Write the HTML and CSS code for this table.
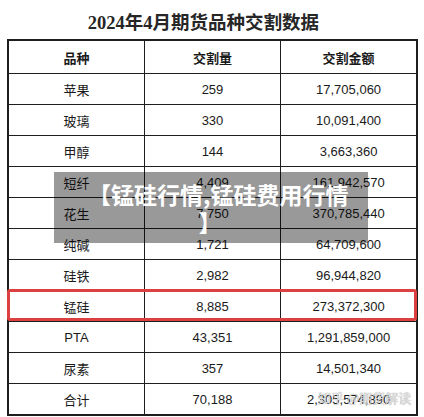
FILE: index.html
```html
<!DOCTYPE html>
<html lang="zh-CN">
<head>
<meta charset="utf-8">
<title>2024年4月期货品种交割数据</title>
<link rel="stylesheet" href="styles.css">
</head>
<body>
<div class="page">
  <h1 class="title">2024年4月期货品种交割数据</h1>
  <table class="data">
    <thead>
      <tr><th>品种</th><th>交割量</th><th>交割金额</th></tr>
    </thead>
    <tbody>
      <tr><td>苹果</td><td>259</td><td>17,705,060</td></tr>
      <tr><td>玻璃</td><td>330</td><td>10,091,400</td></tr>
      <tr><td>甲醇</td><td>144</td><td>3,663,360</td></tr>
      <tr><td>短纤</td><td>4,409</td><td>161,942,570</td></tr>
      <tr><td>花生</td><td>7,750</td><td>370,785,440</td></tr>
      <tr><td>纯碱</td><td>1,721</td><td>64,709,600</td></tr>
      <tr><td>硅铁</td><td>2,982</td><td>96,944,820</td></tr>
      <tr><td>锰硅</td><td>8,885</td><td>273,372,300</td></tr>
      <tr><td>PTA</td><td>43,351</td><td>1,291,859,000</td></tr>
      <tr><td>尿素</td><td>357</td><td>14,501,340</td></tr>
      <tr><td>合计</td><td>70,188</td><td>2,305,574,890</td></tr>
    </tbody>
  </table>
  <div class="highlight"></div>
  <div class="caption">
    <span class="caption-line first">【锰硅行情,锰硅费用行情</span>
    <span class="caption-line last">】</span>
  </div>
  <div class="watermark">知乎 @期货解读</div>
</div>
</body>
</html>
```

FILE: styles.css
```css
html, body {
  margin: 0;
  padding: 0;
  background: #ffffff;
}

.page {
  position: relative;
  width: 424px;
  height: 417px;
  padding: 0 6px 0 7px;
  box-sizing: border-box;
  overflow: hidden;
  font-family: "Liberation Sans", "Noto Sans CJK SC", sans-serif;
  color: #1a1a1a;
}

.title {
  margin: 0 0 5px 0;
  padding: 12px 18px 0 0;
  font-family: "Liberation Serif", "Noto Sans CJK SC", serif;
  font-size: 18.5px;
  line-height: 22px;
  font-weight: 700;
  text-align: center;
  color: #262626;
}

.data {
  width: 411px;
  border-collapse: collapse;
  border: 2px solid #1e1e1e;
  table-layout: fixed;
  font-size: 13px;
}

.data th,
.data td {
  border: 1px solid #1e1e1e;
  text-align: center;
  vertical-align: middle;
  padding: 0;
}

.data th {
  height: 32px;
  font-weight: 700;
}

.data td {
  height: 30px;
}

.highlight {
  position: absolute;
  left: 7px;
  top: 289px;
  width: 410px;
  height: 32px;
  box-sizing: border-box;
  border: 3px solid #dd4040;
  border-radius: 3px;
}

.caption {
  position: absolute;
  left: 54px;
  top: 172px;
  width: 314px;
  height: 71px;
  box-sizing: border-box;
  padding: 8px 0 0 0;
  background: rgba(0, 0, 0, 0.4);
  color: #ffffff;
  font-family: "Noto Sans CJK SC", sans-serif;
  font-weight: 700;
  font-size: 23px;
  line-height: 28px;
}

.caption-line {
  display: block;
  white-space: nowrap;
}

.caption-line.first {
  padding-left: 34px;
  text-align: left;
}

.caption-line.last {
  padding-right: 2px;
  text-align: center;
}

.watermark {
  position: absolute;
  left: 318px;
  top: 390px;
  font-family: "Noto Sans CJK SC", sans-serif;
  font-size: 13px;
  line-height: 16px;
  color: rgba(235, 235, 235, 0.85);
  text-shadow: 0 0 1px rgba(90, 90, 90, 0.7);
}
```
